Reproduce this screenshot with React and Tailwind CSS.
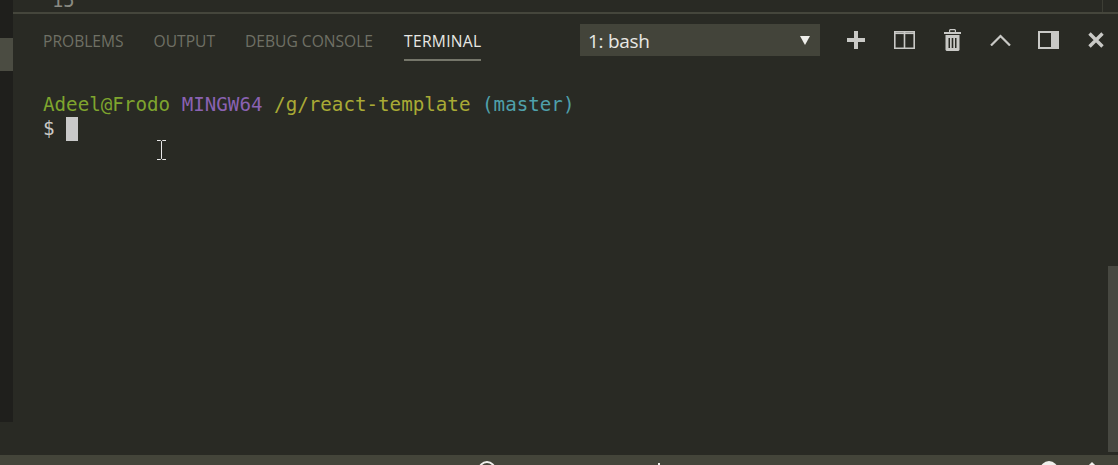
import React from "react";

function TabLabel({ children, active }) {
    return (
        <div className={`relative h-full flex items-center pt-[4px] ${active ? "text-[#e7e7e3] ml-[1px] tracking-[0.3px]" : "text-[#6f7065]"}`}>
            {children}
            {active && <div className="absolute left-0 right-0 bottom-[5px] h-[2px] bg-[#75766a]" />}
        </div>
    );
}

function IconButton({ children }) {
    return <div className="w-[24px] h-[24px] flex items-center justify-center text-[#c9c9c6]">{children}</div>;
}

export default function App() {
    return (
        <div className="w-[1118px] h-[465px] overflow-hidden bg-[#292a24] flex flex-col font-['Liberation_Sans',sans-serif]">
            <div className="flex-1 flex min-h-0">
                {/* left gutter of the editor */}
                <div className="w-[13px] flex flex-col shrink-0 bg-[#1f1f1c]">
                    <div className="h-[38px]" />
                    <div className="h-[33px] bg-[#4b4c42]" />
                    <div className="h-[351px]" />
                    <div className="flex-1 bg-[#292a24]" />
                </div>

                <div className="flex-1 flex flex-col min-w-0">
                    <div className="h-[12px] relative overflow-hidden">
                        <span className="absolute left-[39px] top-[-11px] text-[18.800px] leading-[24px] text-[#8a8a82] font-['DejaVu_Sans_Mono',monospace]">15</span>
                        <div className="absolute right-[15px] top-0 bottom-0 w-[1px] bg-[#3d3e35]" />
                    </div>
                    <div className="h-[2px] bg-[#45463c]" />

                    <div className="flex h-[52px] items-center">
                        <div className="flex h-full items-center gap-[30px] pl-[30px] w-[567px] text-[15.600px] font-['Open_Sans',sans-serif]">
                            <TabLabel>PROBLEMS</TabLabel>
                            <TabLabel>OUTPUT</TabLabel>
                            <TabLabel>DEBUG CONSOLE</TabLabel>
                            <TabLabel active>TERMINAL</TabLabel>
                        </div>
                        <div className="w-[240px] h-[32px] bg-[#43443a] flex items-center justify-between pl-[8px] pr-[10px] text-[#e8e8e4] text-[19px] font-['Open_Sans',sans-serif]">
                            <span className="tracking-[-0.3px] pt-[2px]">1: bash</span>
                            <svg width="10" height="9" viewBox="0 0 10 9"><path d="M0 0h10L5 9z" fill="#eeeeea" /></svg>
                        </div>
                        <div className="flex items-center gap-[24px] ml-[24px]">
                            <IconButton>
                                <svg width="18" height="18" viewBox="0 0 18 18"><path d="M7 0h4v7h7v4h-7v7H7v-7H0V7h7z" fill="currentColor" /></svg>
                            </IconButton>
                            <IconButton>
                                <svg width="21" height="18" viewBox="0 0 21 18" fill="none" stroke="currentColor" strokeWidth="1.600"><path d="M.8 .8h19.400v16.400H.8zM10.500 .8v16.400" /><path d="M.8 2.300h19.400" /></svg>
                            </IconButton>
                            <IconButton>
                                <svg width="17" height="22" viewBox="0 0 17 22"><path fillRule="evenodd" d="M0 3h5V1l1-1h5l1 1v2h5v2H0zM6.200 1.200V3h4.600V1.200zM1.500 6h14v15l-1 1h-12l-1-1zM4.500 9v10H6V9zM7.700 9v10h1.600V9zM11 9v10h1.500V9z" fill="currentColor" /></svg>
                            </IconButton>
                            <IconButton>
                                <svg width="21" height="12" viewBox="0 0 21 12" fill="none" stroke="currentColor" strokeWidth="2.200"><path d="M1 11.500l9.500-9.500 9.500 9.500" /></svg>
                            </IconButton>
                            <IconButton>
                                <svg width="21" height="18" viewBox="0 0 21 18"><path fillRule="evenodd" d="M0 0h21v18H0zM2 2v14h11V2z" fill="currentColor" /></svg>
                            </IconButton>
                            <IconButton>
                                <svg width="16" height="16" viewBox="0 0 16 16" fill="none" stroke="currentColor" strokeWidth="3.400"><path d="M1.500 1.500l13 13M14.500 1.500l-13 13" /></svg>
                            </IconButton>
                        </div>
                    </div>

                    <div className="relative flex-1 min-h-0 flex">
                        <div className="flex-1 pl-[30px] pt-[27px] font-['DejaVu_Sans_Mono',monospace] text-[19.200px] leading-[24px] text-[#c9c9c6] whitespace-pre">
                            <div>
                                <span className="text-[#7fa52e]">Adeel@Frodo</span>{" "}
                                <span className="text-[#8a62b2]">MINGW64</span>{" "}
                                <span className="text-[#a9aa35]">/g/react-template</span>{" "}
                                <span className="text-[#4fa0ab]">(master)</span>
                            </div>
                            <div className="flex items-center">
                                <span>$ </span>
                                <span className="w-[12px] h-[24px] -mt-[1px] bg-[#c9c9c9]" />
                            </div>
                        </div>
                        {/* mouse cursor */}
                        <svg className="absolute left-[144px] top-[74px]" width="9" height="20" viewBox="0 0 9 20" fill="none" stroke="#e8e8e8" strokeWidth="1"><path d="M0 .5h3.500l1 1 1-1H9M4.500 1.500v17M0 19.500h3.500l1-1 1 1H9" /></svg>
                        {/* scrollbar */}
                        <div className="w-[10px] shrink-0 pt-[200px] pb-[3px]">
                            <div className="h-full bg-[#474841]" />
                        </div>
                    </div>
                </div>
            </div>

            {/* status bar */}
            <div className="relative h-[10px] shrink-0 bg-[#44453a] overflow-hidden">
                <div className="absolute left-[478px] top-[6px] w-[18px] h-[18px] rounded-full border-2 border-[#f0f0ec]" />
                <div className="absolute left-[658px] top-[8px] w-[2px] h-[6px] bg-[#f0f0ec]" />
                <div className="absolute left-[1040px] top-[6px] w-[18px] h-[18px] rounded-full bg-[#f0f0ec]" />
                <div className="absolute left-[1087px] top-[9px] w-[10px] h-[10px] rotate-45 bg-[#f0f0ec]" />
            </div>
        </div>
    );
}
